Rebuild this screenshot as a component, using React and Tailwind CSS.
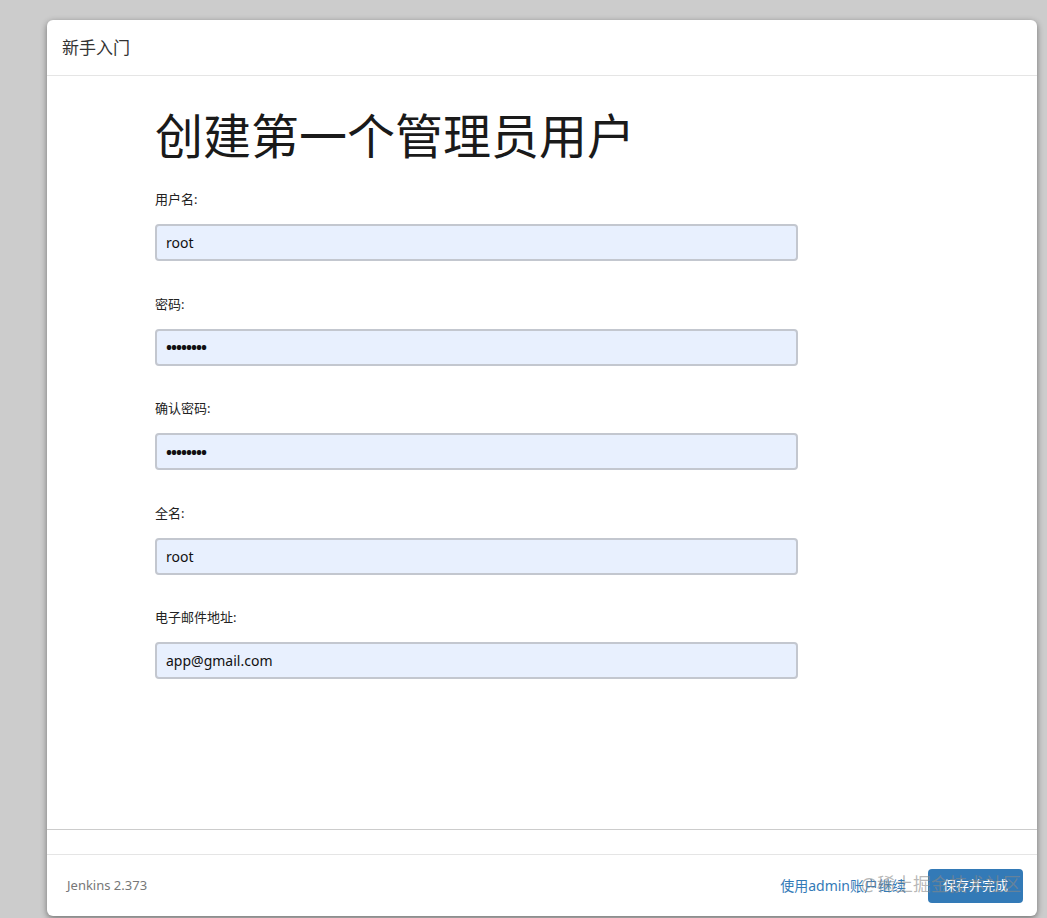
const fields = [
  { label: '用户名:', value: 'root', type: 'text' },
  { label: '密码:', value: '••••••••', type: 'password' },
  { label: '确认密码:', value: '••••••••', type: 'password' },
  { label: '全名:', value: 'root', type: 'text' },
  { label: '电子邮件地址:', value: 'app@gmail.com', type: 'text' },
];

const font = { fontFamily: '"Noto Sans", "Noto Sans CJK SC", sans-serif' };

export default function App() {
  return (
    <div className="min-h-screen w-full bg-[#cccccc] pt-[20px] pl-[47px]" style={font}>
      <div className="relative flex h-[896px] w-[990px] flex-col rounded-[6px] bg-white shadow-[0_2px_6px_rgba(0,0,0,0.45)]">
        {/* header */}
        <div className="flex h-[56px] items-center border-b border-[#e5e5e5] px-[15px] text-[17px] leading-[20px] text-[#333]">
          新手入门
        </div>

        {/* body */}
        <div className="flex-1 border-b border-[#cccccc] pl-[108px] pt-[31px]">
          <h1 className="mb-[25px] text-[48px] font-normal leading-[58px] text-[#1a1a1a]">
            创建第一个管理员用户
          </h1>
          <div className="flex flex-col gap-[33.5px]">
            {fields.map((f) => (
              <div key={f.label} className="flex flex-col">
                <label className="mb-[16px] text-[13px] leading-[18px] text-[#222]">{f.label}</label>
                <div className="flex h-[37px] w-[643px] items-center rounded-[4px] border-2 border-[#c3c7cf] bg-[#e8f0fe] px-[9px] text-[14px] text-[#111]">
                  {f.type === 'password' ? (
                    <span className="text-[16px] font-bold tracking-[-1px]">{f.value}</span>
                  ) : (
                    f.value
                  )}
                </div>
              </div>
            ))}
          </div>
        </div>

        {/* footer */}
        <div className="mt-[24px] flex h-[62px] items-center justify-between border-t border-[#e5e5e5] pl-[20px] pr-[14px]">
          <span className="text-[13px] text-[#777]">Jenkins 2.373</span>
          <div className="flex items-center gap-[22px]">
            <a className="text-[14px] text-[#337ab7]">使用admin账户继续</a>
            <button className="h-[34px] w-[95px] rounded-[4px] bg-[#337ab7] text-[13px] text-white">
              保存并完成
            </button>
          </div>
        </div>

        {/* watermark */}
        <div className="pointer-events-none absolute bottom-[20px] right-[16px] text-[18px] leading-[24px] text-[#888]/60">
          @稀土掘金技术社区
        </div>
      </div>
    </div>
  );
}
